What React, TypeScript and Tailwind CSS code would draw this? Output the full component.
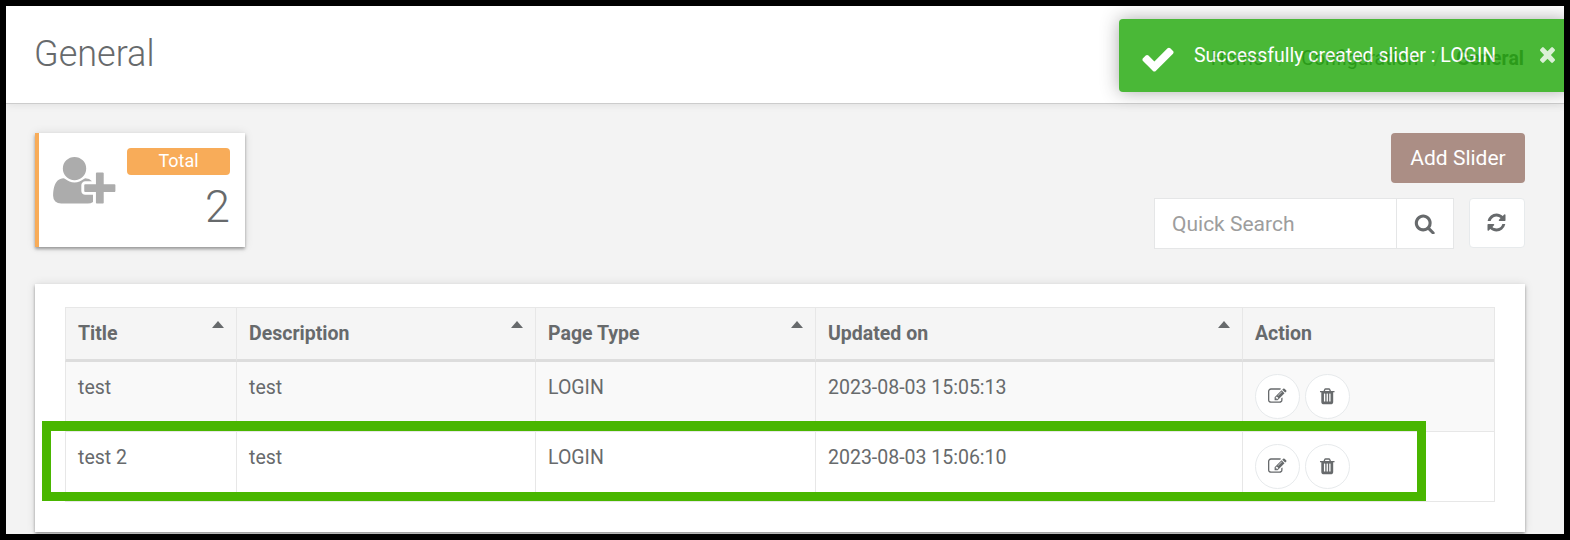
import React from "react";

type IconProps = { d: string; className?: string; viewBox?: string; stretch?: boolean };

function Icon({ d, className, viewBox = "0 0 1792 1792", stretch = false }: IconProps) {
  return (
    <svg
      className={className}
      viewBox={viewBox}
      fill="currentColor"
      preserveAspectRatio={stretch ? "none" : undefined}
      aria-hidden="true"
    >
      <path d={d} />
    </svg>
  );
}

const ICONS = {
  check:
    "M1671 566q0 40-28 68l-724 724-136 136q-28 28-68 28t-68-28l-136-136-362-362q-28-28-28-68t28-68l136-136q28-28 68-28t68 28l294 295 656-657q28-28 68-28t68 28l136 136q28 28 28 68z",
  close:
    "M1490 1322q0 40-28 68l-136 136q-28 28-68 28t-68-28l-294-294-294 294q-28 28-68 28t-68-28l-136-136q-28-28-28-68t28-68l294-294-294-294q-28-28-28-68t28-68l136-136q28-28 68-28t68 28l294 294 294-294q28-28 68-28t68 28l136 136q28 28 28 68t-28 68l-294 294 294 294q28 28 28 68z",
  search:
    "M1216 832q0-185-131.5-316.5t-316.5-131.5-316.5 131.5-131.5 316.5 131.5 316.5 316.5 131.5 316.5-131.5 131.5-316.5zm512 832q0 52-38 90t-90 38q-54 0-90-38l-343-342q-179 124-399 124-143 0-273.5-55.5t-225-150-150-225-55.5-273.5 55.5-273.5 150-225 225-150 273.5-55.5 273.5 55.5 225 150 150 225 55.5 273.5q0 220-124 399l343 343q37 37 37 90z",
  refresh:
    "M1639 1056q0 5-1 7-64 268-268 434.5t-478 166.5q-146 0-282.5-55t-243.5-157l-129 129q-19 19-45 19t-45-19-19-45v-448q0-26 19-45t45-19h448q26 0 45 19t19 45-19 45l-137 137q71 66 161 102t187 36q134 0 250-65t186-179q11-17 53-117 8-23 30-23h192q13 0 22.5 9.5t9.5 22.5zm25-800v448q0 26-19 45t-45 19h-448q-26 0-45-19t-19-45 19-45l138-138q-148-137-349-137-134 0-250 65t-186 179q-11 17-53 117-8 23-30 23h-199q-13 0-22.5-9.5t-9.5-22.5v-7q65-268 270-434.5t480-166.5q146 0 284 55.5t245 156.5l130-129q19-19 45-19t45 19 19 45z",
  userPlus:
    "M704 896q-159 0-271.5-112.5t-112.5-271.5 112.5-271.5 271.5-112.5 271.5 112.5 112.5 271.5-112.5 271.5-271.5 112.5zm960 128h352q13 0 22.5 9.5t9.5 22.5v192q0 13-9.5 22.5t-22.5 9.5h-352v352q0 13-9.5 22.5t-22.5 9.5h-192q-13 0-22.5-9.5t-9.5-22.5v-352h-352q-13 0-22.5-9.5t-9.5-22.5v-192q0-13 9.5-22.5t22.5-9.5h352v-352q0-13 9.5-22.5t22.5-9.5h192q13 0 22.5 9.5t9.5 22.5v352zm-736 224q0 52 38 90t90 38h256v238q-68 50-171 50h-874q-121 0-194-69t-73-190q0-53 3.5-103.5t14-109 26.5-108.5 43-97.5 62-81 85.5-53.5 111.5-20q19 0 39 17 79 61 154.5 91.5t164.5 30.5 164.5-30.5 154.5-91.5q20-17 39-17 132 0 217 96h-223q-52 0-90 38t-38 90v192z",
  edit:
    "M888 1184l116-116-152-152-116 116v56h96v96h56zm440-720q-16-16-33 1l-350 350q-17 17-1 33t33-1l350-350q17-17 1-33zm80 594v190q0 119-84.5 203.5t-203.5 84.5h-832q-119 0-203.5-84.5t-84.5-203.5v-832q0-119 84.5-203.5t203.5-84.5h832q63 0 117 25 15 7 18 23 3 17-9 29l-49 49q-14 14-32 8-23-6-45-6h-832q-66 0-113 47t-47 113v832q0 66 47 113t113 47h832q66 0 113-47t47-113v-126q0-13 9-22l64-64q15-15 35-7t20 29zm-96-738l288 288-672 672h-288v-288zm444 132l-92 92-288-288 92-92q28-28 68-28t68 28l152 152q28 28 28 68t-28 68z",
  trash:
    "M704 1376v-704q0-14-9-23t-23-9h-64q-14 0-23 9t-9 23v704q0 14 9 23t23 9h64q14 0 23-9t9-23zm256 0v-704q0-14-9-23t-23-9h-64q-14 0-23 9t-9 23v704q0 14 9 23t23 9h64q14 0 23-9t9-23zm256 0v-704q0-14-9-23t-23-9h-64q-14 0-23 9t-9 23v704q0 14 9 23t23 9h64q14 0 23-9t9-23zm-544-992h448l-48-117q-7-9-17-11h-317q-10 2-17 11zm928 32v64q0 14-9 23t-23 9h-96v948q0 83-47 143.5t-113 60.5h-832q-66 0-113-58.5t-47-141.5v-952h-96q-14 0-23-9t-9-23v-64q0-14 9-23t23-9h309l70-167q15-37 54-63t79-26h320q40 0 79 26t54 63l70 167h309q14 0 23 9t9 23z",
};

const COLUMNS = [
  { label: "Title", sortable: true },
  { label: "Description", sortable: true },
  { label: "Page Type", sortable: true },
  { label: "Updated on", sortable: true },
  { label: "Action", sortable: false },
];

const ROWS = [
  ["test", "test", "LOGIN", "2023-08-03 15:05:13"],
  ["test 2", "test", "LOGIN", "2023-08-03 15:06:10"],
];

function RoundButton({ icon, label }: { icon: string; label: string }) {
  return (
    <button
      aria-label={label}
      className="flex size-[45px] items-center justify-center rounded-full border border-[#e7eaec] bg-white pb-[1.5px]"
    >
      <Icon d={icon} className="size-[18.5px]" />
    </button>
  );
}

function Toast() {
  return (
    <div className="absolute top-[13px] left-[1113px] flex h-[73px] w-[450px] rounded-[4px] bg-[#1da706] text-white opacity-80 shadow-[0_0_18px_#999]">
      <Icon d={ICONS.check} className="mt-[22px] ml-[21px] size-9 shrink-0" />
      <p className="mt-[23px] ml-[18px] text-[19.5px] leading-[28px] whitespace-nowrap">
        Successfully created slider : LOGIN
      </p>
      <Icon
        d={ICONS.close}
        viewBox="302 366 1188 1188"
        stretch
        className="mt-[28px] ml-[43.5px] h-[16px] w-[15px] shrink-0 opacity-80"
      />
    </div>
  );
}

export default function App() {
  return (
    <div className="relative h-[540px] w-[1570px] overflow-hidden border-[6px] border-black bg-[#f3f3f3] font-['Roboto',sans-serif] text-[19.5px] text-[#676a6c]">
      <header className="flex h-[98px] items-center justify-between border-b border-[#ccc] bg-white pr-[40px] pl-[28px] shadow-[0_1px_8px_rgba(0,0,0,0.08)]">
        <h1 className="pb-[2px] text-[36px] leading-none font-light">General</h1>
        <nav className="flex gap-[15px] pt-[9px] leading-[28px]">
          <span>Home</span>
          <span className="text-[#ccc]">/</span>
          <span>Configuration</span>
          <span className="text-[#ccc]">/</span>
          <strong className="font-bold">General</strong>
        </nav>
      </header>

      <main className="px-[29px] pt-[29px]">
        <section className="flex h-[151px] items-start justify-between pr-[10px]">
          <div className="flex h-[114px] w-[210px] justify-between border-l-4 border-[#f8ac59] bg-white pt-[15px] pr-[15px] pl-[14px] shadow-[0_2px_3px_rgba(0,0,0,0.35),0_0_9px_rgba(0,0,0,0.1)]">
            <Icon
              d={ICONS.userPlus}
              viewBox="0 0 2048 1792"
              className="mt-[5px] h-[54.5px] w-[62.5px] text-[#acacac]"
            />
            <div className="flex w-[103px] flex-col">
              <span className="h-[27px] rounded-[4px] bg-[#f8ac59] text-center text-[18px] leading-[26px] text-white">
                Total
              </span>
              <span className="mt-[6px] text-right text-[45px] leading-[52px] font-light">2</span>
            </div>
          </div>

          <div className="flex flex-col items-end">
            <button className="h-[50px] w-[134px] rounded-[4px] bg-[#ab8e85] text-[21px] leading-[30px] text-white">
              Add Slider
            </button>
            <div className="mt-[15px] flex items-start gap-[15px]">
              <div className="flex h-[51px] w-[300px] border border-[#e5e6e7] bg-white">
                <input
                  className="w-[242px] border-r border-[#e5e6e7] pt-[2px] pl-[17px] text-[21px] outline-none placeholder:text-[#9d9d9d]"
                  placeholder="Quick Search"
                />
                <button aria-label="Search" className="flex grow items-center justify-center pr-[1px]">
                  <Icon d={ICONS.search} className="size-[21.5px]" />
                </button>
              </div>
              <button
                aria-label="Refresh"
                className="flex h-[50px] w-[56px] items-center justify-center rounded-[4px] border border-[#e7eaec] bg-white pr-[2px] pb-[1px]"
              >
                <Icon d={ICONS.refresh} className="size-[21px]" />
              </button>
            </div>
          </div>
        </section>

        <section className="h-[248px] w-[1490px] bg-white pt-[23px] pl-[30px] shadow-[0_2px_3px_rgba(0,0,0,0.35),0_0_9px_rgba(0,0,0,0.1)]">
          <table className="w-[1430px] table-fixed border-separate border-spacing-0 border-t border-r border-[#e7e7e7]">
            <colgroup>
              <col className="w-[171px]" />
              <col className="w-[299px]" />
              <col className="w-[280px]" />
              <col className="w-[427px]" />
              <col />
            </colgroup>
            <thead>
              <tr className="h-[54px] bg-[#f5f5f5]">
                {COLUMNS.map((c) => (
                  <th
                    key={c.label}
                    className="border-b-[3px] border-l border-b-[#ddd] border-l-[#e7e7e7] p-0 pl-3 text-left align-top leading-[28px] font-bold"
                  >
                    <div className="flex h-[40px] justify-between pr-3">
                      <span className="pt-[12px]">{c.label}</span>
                      {c.sortable && (
                        <svg className="mt-[13px] h-[7px] w-[12px]" viewBox="0 0 12 7" fill="currentColor">
                          <path d="M6 0L12 7H0Z" />
                        </svg>
                      )}
                    </div>
                  </th>
                ))}
              </tr>
            </thead>
            <tbody>
              {ROWS.map((row) => (
                <tr key={row[0]} className="h-[70px] odd:bg-[#f9f9f9]">
                  {row.map((cell, i) => (
                    <td key={i} className="border-b border-l border-[#e7e7e7] p-0 pt-3 pl-3 align-top leading-[28px]">
                      {cell}
                    </td>
                  ))}
                  <td className="border-b border-l border-[#e7e7e7] p-0 pt-3 pl-3 align-top">
                    <div className="flex gap-[5px]">
                      <RoundButton icon={ICONS.edit} label="Edit" />
                      <RoundButton icon={ICONS.trash} label="Delete" />
                    </div>
                  </td>
                </tr>
              ))}
            </tbody>
          </table>
        </section>
      </main>

      <div className="absolute top-[415px] left-[36px] h-[80px] w-[1384px] border-[9px] border-t-[10px] border-[#49b600]" />
      <Toast />
    </div>
  );
}
